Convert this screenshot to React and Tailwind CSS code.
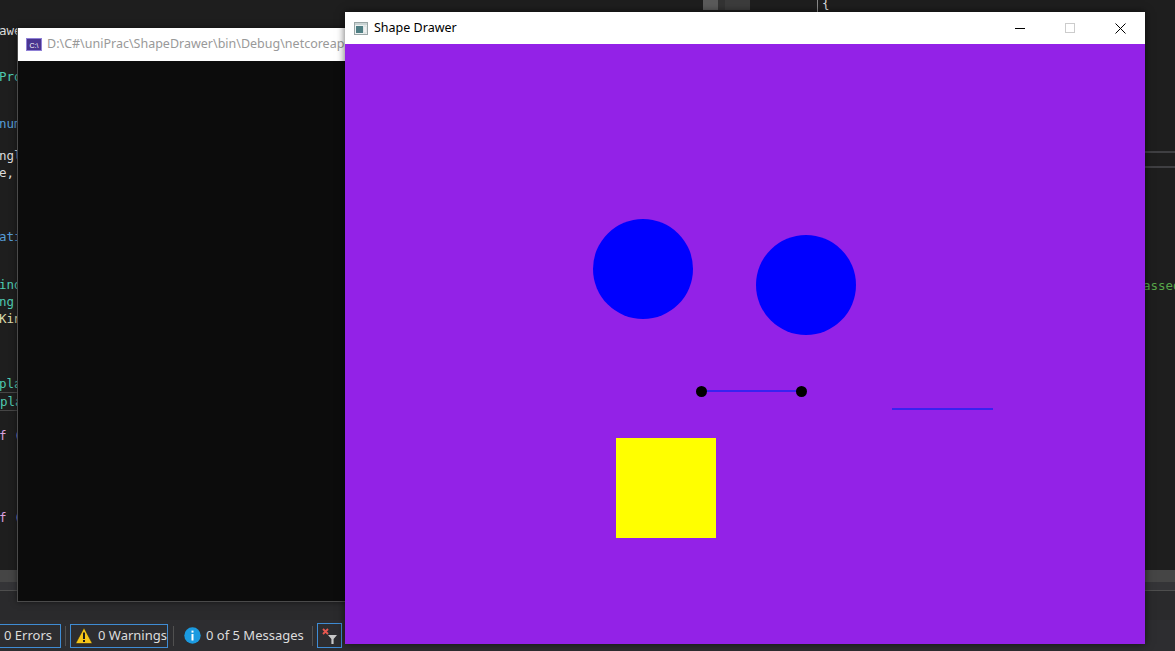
import React from "react";

const codeLines = [
  { text: "awer", cls: "mt-[10px] text-[#dcdcdc]" },
  { text: "Prog", cls: "mt-[29px] text-[#4ec9b0]" },
  { text: "num", cls: "mt-[30px] text-[#569cd6]" },
  { text: "ngle", cls: "mt-[15px] text-[#dcdcdc]" },
  { text: "e,", cls: "mt-0 text-[#dcdcdc]" },
  { text: "atic", cls: "mt-[47px] text-[#569cd6]" },
  { text: "ind", cls: "mt-[31px] text-[#4ec9b0]" },
  { text: "ng", cls: "mt-0 text-[#4ec9b0]" },
  { text: "Kind", cls: "mt-0 text-[#dcdcaa]" },
  { text: "pla", cls: "mt-[48px] text-[#4ec9b0]" },
  { text: "pla", cls: "mt-0 text-[#4ec9b0] border border-[#464646]" },
  { text: "f (", cls: "mt-[16px] text-[#d8a0df]" },
  { text: "f (", cls: "mt-[65px] text-[#d8a0df]" },
];

function ConsoleIcon() {
  return (
    <svg width="16" height="13" viewBox="0 0 16 13" className="shrink-0">
      <rect x="0.5" y="0.5" width="15" height="12" fill="#4a3590" stroke="#8f80d6" />
      <text x="8" y="9.5" fontSize="7" fill="#ffffff" textAnchor="middle" fontFamily="Liberation Sans, sans-serif">C:\</text>
    </svg>
  );
}

function AppIcon() {
  return (
    <svg width="14" height="13" viewBox="0 0 14 13" className="shrink-0">
      <rect x="0.5" y="0.5" width="13" height="12" fill="#eef2f2" stroke="#9aa6a6" />
      <rect x="1" y="1" width="12" height="2" fill="#c9d3d3" />
      <rect x="2" y="4" width="7" height="7" fill="#4f7f84" />
      <rect x="10" y="4" width="2" height="7" fill="#ffffff" stroke="#b8c2c2" strokeWidth="0.5" />
    </svg>
  );
}

function WarningIcon() {
  return (
    <svg width="18" height="18" viewBox="0 0 18 18" className="shrink-0">
      <path d="M9 0.8 L17.4 16.6 L0.6 16.6 Z" fill="#f5c518" stroke="#1e1e1e" strokeWidth="0.6" strokeLinejoin="round" />
      <rect x="8" y="5.5" width="2" height="6.5" fill="#1e1e1e" />
      <rect x="8" y="13" width="2" height="2" fill="#1e1e1e" />
    </svg>
  );
}

function InfoIcon() {
  return (
    <svg width="17" height="17" viewBox="0 0 17 17" className="shrink-0">
      <circle cx="8.5" cy="8.5" r="8.2" fill="#1b9ae0" />
      <rect x="7.5" y="7" width="2" height="6.5" fill="#ffffff" />
      <rect x="7.5" y="3.6" width="2" height="2" fill="#ffffff" />
    </svg>
  );
}

function FilterIcon() {
  return (
    <svg width="18" height="18" viewBox="0 0 18 18" className="shrink-0">
      <path d="M2 2 L7 7 M7 2 L2 7" stroke="#e8574f" strokeWidth="1.8" />
      <path d="M7 8 L16 8 L12.6 12 L12.6 17 L10.4 17 L10.4 12 Z" fill="#c8c8c8" />
    </svg>
  );
}

function ConsoleWindow() {
  return (
    <div className="absolute left-[17px] top-[28px] w-[340px] h-[574px] flex flex-col border-l border-b border-[#4a4a4a] shadow-[0_0_6px_rgba(0,0,0,0.5)]">
      <div className="h-[33px] bg-white flex items-center pl-[8px] gap-[5px] shrink-0 overflow-hidden">
        <ConsoleIcon />
        <span className="text-[12.5px] text-[#999999] whitespace-nowrap">
          D:\C#\uniPrac\ShapeDrawer\bin\Debug\netcoreapp3.1\ShapeDrawer.exe
        </span>
      </div>
      <div className="flex-1 bg-[#0c0c0c]" />
    </div>
  );
}

function ShapeDrawerWindow() {
  return (
    <div className="absolute left-[345px] top-[12px] w-[800px] h-[632px] flex flex-col shadow-[0_0_8px_rgba(0,0,0,0.6)]">
      <div className="h-[32px] bg-white flex items-center shrink-0">
        <div className="pl-[9px] pr-[6px] flex items-center">
          <AppIcon />
        </div>
        <span className="text-[12.5px] text-black">Shape Drawer</span>
        <div className="ml-auto flex h-full">
          <div className="w-[50px] h-full flex items-center justify-center">
            <div className="w-[10px] h-px bg-black" />
          </div>
          <div className="w-[50px] h-full flex items-center justify-center">
            <div className="w-[10px] h-[10px] border border-[#cccccc]" />
          </div>
          <div className="w-[50px] h-full flex items-center justify-center">
            <svg width="11" height="11" viewBox="0 0 11 11">
              <path d="M0.5 0.5 L10.5 10.5 M10.5 0.5 L0.5 10.5" stroke="#000000" strokeWidth="1" />
            </svg>
          </div>
        </div>
      </div>
      <div className="relative flex-1 bg-[#9322e7] overflow-hidden">
        {/* circles */}
        <div className="absolute left-[248px] top-[175px] w-[100px] h-[100px] rounded-full bg-[#0000ff]" />
        <div className="absolute left-[411px] top-[191px] w-[100px] h-[100px] rounded-full bg-[#0000ff]" />
        {/* line with end points */}
        <div className="absolute left-[356px] top-[346px] w-[100px] h-[2px] bg-[#3a22f0]" />
        <div className="absolute left-[351px] top-[342px] w-[11px] h-[11px] rounded-full bg-black" />
        <div className="absolute left-[451px] top-[342px] w-[11px] h-[11px] rounded-full bg-black" />
        {/* plain line */}
        <div className="absolute left-[547px] top-[364px] w-[101px] h-[2px] bg-[#3a22f0]" />
        {/* rectangle */}
        <div className="absolute left-[271px] top-[394px] w-[100px] h-[100px] bg-[#ffff00]" />
      </div>
    </div>
  );
}

function StatusItem({ boxed, children, width }) {
  return (
    <div
      className={
        "h-[24px] flex items-center gap-[5px] px-[4px] text-[13px] text-[#dcdcdc] whitespace-nowrap " +
        (boxed ? "border border-[#3f8cd4] " : "border border-transparent ") +
        width
      }
    >
      {children}
    </div>
  );
}

export default function App() {
  return (
    <div className="relative w-[1175px] h-[651px] overflow-hidden bg-[#1e1e1e] font-['Noto_Sans',sans-serif]">
      {/* Editor behind the windows */}
      <div className="flex flex-col h-full">
        <div className="flex h-[570px]">
          <div className="flex-1 flex flex-col font-['DejaVu_Sans_Mono',monospace] text-[12.5px] leading-[17px]">
            <div className="h-[12px] flex items-start pl-[703px] shrink-0">
              <div className="w-[15px] h-[10px] bg-[#5a5a5a]" />
              <div className="w-[7px] h-[10px] bg-[#333333]" />
              <div className="w-[25px] h-[10px] bg-[#3c3c3c]" />
              <div className="w-[67px]" />
              <div className="w-px h-[12px] bg-[#8a8a8a]" />
              <span className="ml-[4px] -mt-[3px] text-[#dcdcdc] leading-[14px]">{"{"}</span>
            </div>
            {codeLines.map((line, i) => (
              <div key={i} className={"w-[20px] whitespace-nowrap -ml-[1px] " + line.cls}>
                {line.text}
              </div>
            ))}
          </div>
          <div className="w-[30px] flex flex-col">
            <div className="h-[151px]" />
            <div className="h-[2px] bg-[#3f3f42]" />
            <div className="h-[13px]" />
            <div className="h-[2px] bg-[#3f3f42]" />
            <div className="h-[109px]" />
            <div className="-ml-[2px] font-['DejaVu_Sans_Mono',monospace] text-[12.5px] leading-[17px] text-[#57a64a] whitespace-nowrap">
              assed
            </div>
          </div>
        </div>
        <div className="h-[12px] bg-[#454545]" />
        <div className="h-[8px] bg-[#343437]" />
        <div className="h-px bg-[#4e4e4e]" />
        <div className="h-[29px] bg-[#2a2a2c]" />
        <div className="h-[31px] bg-[#2d2d30] flex items-center">
          <div className="-ml-px">
            <StatusItem boxed width="w-[62px]">0 Errors</StatusItem>
          </div>
          <div className="w-px h-[20px] bg-[#505050] mx-[4px]" />
          <StatusItem boxed width="w-[98px]">
            <WarningIcon />
            <span>0 Warnings</span>
          </StatusItem>
          <div className="w-px h-[20px] bg-[#505050] ml-[5px] mr-[5px]" />
          <StatusItem width="w-[128px]">
            <InfoIcon />
            <span>0 of 5 Messages</span>
          </StatusItem>
          <div className="w-px h-[20px] bg-[#505050] ml-[5px] mr-[4px]" />
          <div className="w-[25px] h-[25px] border border-[#3f8cd4] flex items-center justify-center">
            <FilterIcon />
          </div>
        </div>
      </div>

      <ConsoleWindow />
      <ShapeDrawerWindow />
    </div>
  );
}
